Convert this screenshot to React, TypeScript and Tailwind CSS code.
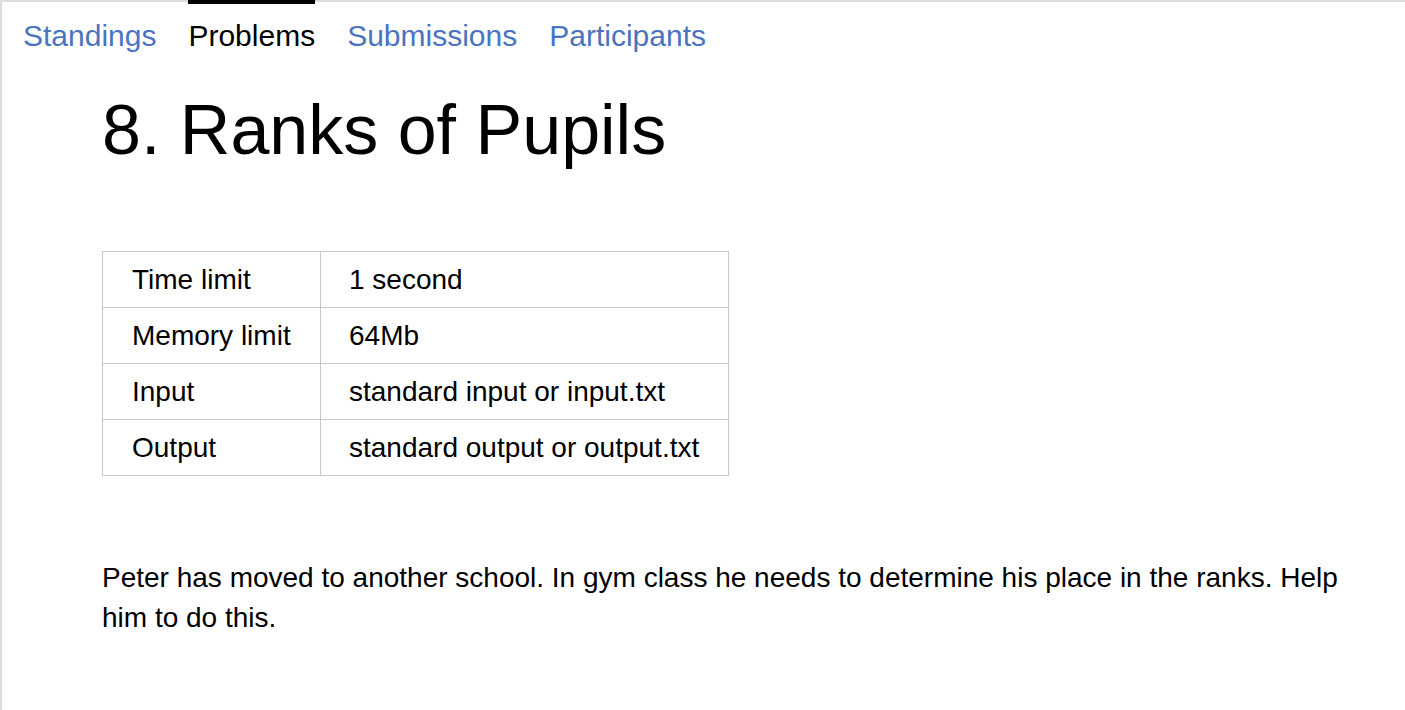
const TABS = [
  { label: "Standings", active: false },
  { label: "Problems", active: true },
  { label: "Submissions", active: false },
  { label: "Participants", active: false },
];

const LIMITS = [
  ["Time limit", "1 second"],
  ["Memory limit", "64Mb"],
  ["Input", "standard input or input.txt"],
  ["Output", "standard output or output.txt"],
];

export default function App() {
  return (
    <div
      className="min-h-[710px] bg-white border-t-2 border-l-2 border-[#dcdcdc] text-black"
      style={{ fontFamily: '"Liberation Sans", Arial, sans-serif' }}
    >
      {/* Tabs */}
      <nav className="flex gap-[32px] pl-[21px] -mt-[2px]">
        {TABS.map(tab => (
          <a
            key={tab.label}
            href="#"
            className={
              tab.active
                ? "border-t-4 border-black pt-[15px] text-[30px] leading-[34px] text-black"
                : "border-t-4 border-transparent pt-[15px] text-[30px] leading-[34px] text-[#4a74c0]"
            }
          >
            {tab.label}
          </a>
        ))}
      </nav>

      {/* Problem */}
      <div className="pl-[100px] pr-[40px]">
        <h1 className="mt-[37px] text-[70px] leading-[80px] font-normal">8. Ranks of Pupils</h1>

        <table className="mt-[81px] border-collapse text-[28px] leading-[33px]">
          <tbody>
            {LIMITS.map(([name, value]) => (
              <tr key={name}>
                <td className="w-[218px] border border-[#c8c8c8] px-[29px] py-[11px]">{name}</td>
                <td className="w-[408px] border border-[#c8c8c8] px-[28px] py-[11px]">{value}</td>
              </tr>
            ))}
          </tbody>
        </table>

        <p className="mt-[82px] text-[28px] leading-[40px]">
          Peter has moved to another school. In gym class he needs to determine his place in the ranks. Help him to
          do this.
        </p>
      </div>
    </div>
  );
}
